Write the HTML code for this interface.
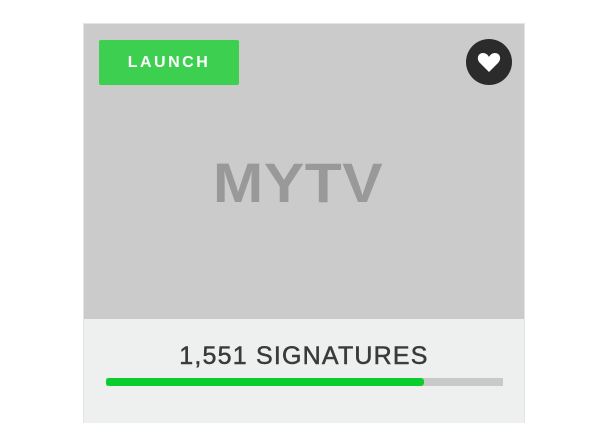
<!DOCTYPE html>
<html><head><style>
body{margin:0;width:600px;height:400px;background:#fff;position:relative;overflow:hidden;font-family:"Liberation Sans",sans-serif}
.card{position:absolute;left:83px;top:23px;width:442px;height:400px;border:1px solid #e4e4e4;border-bottom:none;box-sizing:border-box;background:#eef0ef}
.img{position:absolute;left:0;top:0;width:440px;height:295px;background:#cbcbcb}
.btn{position:absolute;left:15px;top:16px;width:140px;height:45px;background:#3ccf50;border-radius:2px;color:#fff;font-weight:bold;font-size:16px;letter-spacing:2.5px;text-align:center;line-height:45px}
.heart{position:absolute;left:382px;top:15px;width:46px;height:46px;border-radius:50%;background:#2b2b2b}
.title{position:absolute;left:-6px;width:440px;top:128px;text-align:center;font-size:56px;font-weight:bold;color:#999;line-height:62px;letter-spacing:0.5px;transform:scaleX(1.08)}
.sig{position:absolute;left:0;width:440px;top:317px;text-align:center;font-size:25px;color:#3a3a3a;letter-spacing:1.2px;line-height:30px;-webkit-text-stroke:0.5px #3a3a3a}
.bar{position:absolute;left:22px;top:354px;width:397px;height:8px;background:#c9c9c9}
.fill{width:318px;height:8px;background:#09cd2c;border-radius:3px}
</style></head><body>
<div class="card">
<div class="img">
<div class="btn">LAUNCH</div>
<div class="heart"><svg width="46" height="46" viewBox="0 0 46 46"><path d="M23 33 L14 24 C10 20 12 14 17 14 C20 14 22 16 23 18 C24 16 26 14 29 14 C34 14 36 20 32 24 Z" fill="#fff"/></svg></div>
<div class="title">MYTV</div>
</div>
<div class="sig">1,551 SIGNATURES</div>
<div class="bar"><div class="fill"></div></div>
</div>
</body></html>
